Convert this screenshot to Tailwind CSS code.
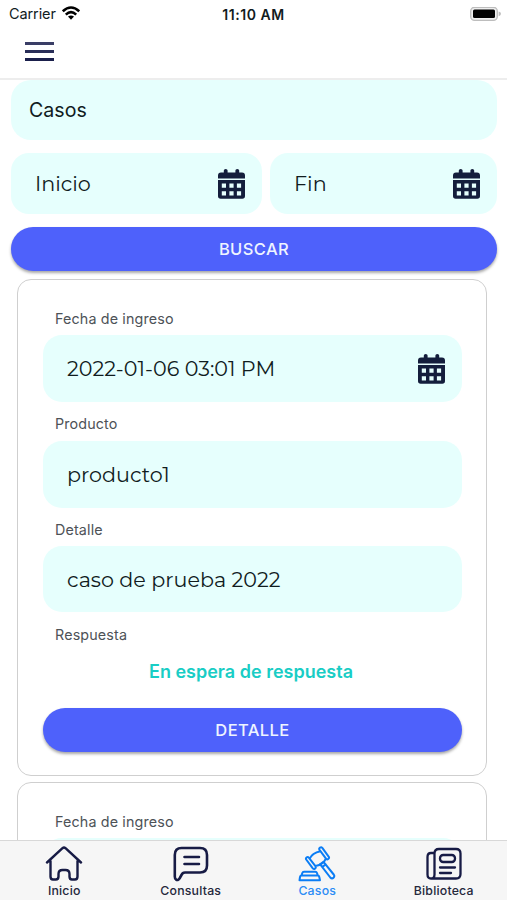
<!DOCTYPE html>
<html lang="es">
  <head>
    <meta charset="UTF-8" />
    <meta name="viewport" content="width=device-width, initial-scale=1.0" />
    <title>Casos</title>
    <script src="https://cdn.jsdelivr.net/npm/@tailwindcss/browser@4"></script>
  </head>
  <body class="bg-white font-[Inter,sans-serif] text-[#111c1e]">
    <svg class="hidden">
      <symbol id="calendar" viewBox="0 0 27 30">
        <path fill="#141e3c" d="M0 9.5V6.5Q0 3.6 3 3.6H5.8V1.5Q5.8 0 7.7 0T9.6 1.5V3.6H17.4V1.5Q17.4 0 19.3 0T21.2 1.5V3.6H24Q27 3.6 27 6.5V9.5Z" />
        <path fill="#141e3c" fill-rule="evenodd" d="M0 11H27V27Q27 29.7 24.3 29.7H2.7Q0 29.7 0 27ZM3.8 14.6V18.8H8V14.6ZM11.4 14.6V18.8H15.6V14.6ZM18.9 14.6V18.8H23.1V14.6ZM3.8 22.2V26.4H8V22.2ZM11.4 22.2V26.4H15.6V22.2ZM18.9 22.2V26.4H23.1V22.2Z" />
      </symbol>
    </svg>
    <div class="flex h-[900px] w-[507px] flex-col overflow-hidden">
      <!-- Barra de estado -->
      <div class="grid h-7 shrink-0 grid-cols-3 items-center">
        <div class="flex items-center gap-[6px] pl-[9px] text-[14.5px]">
          <span class="tracking-[-0.1px]">Carrier</span>
          <svg class="-mt-0.5" width="18" height="14" viewBox="0 0 18 14" fill="none" stroke="#000" stroke-width="2.6">
            <path d="M.8 5.3Q9-2.3 17.2 5.3M3.8 8.6Q9 3.8 14.2 8.6" />
            <path d="M9 13.7 6 10.6Q9 8.2 12 10.6Z" fill="#000" stroke="none" />
          </svg>
        </div>
        <span class="text-center text-[14px] font-semibold tracking-[0.55px]">11:10 AM</span>
        <svg class="mr-[6px] justify-self-end" width="31" height="15" viewBox="0 0 31 15">
          <rect x=".7" y=".2" width="26.6" height="13.2" rx="4" fill="#eee" stroke="#bdbdbd" stroke-width="1.4" />
          <rect x="3" y="2.5" width="22" height="8.6" rx="1.5" fill="#000" />
          <path d="M28.6 4.5Q31 5 31 6.8T28.6 9.2Z" fill="#bdbdbd" />
        </svg>
      </div>

      <header class="flex h-[52px] shrink-0 items-start border-b-2 border-[#ededed] pt-[14px] pl-[25px]">
        <div class="flex flex-col gap-[5px]">
          <div class="h-[3px] w-[29px] bg-[#3a3e66]"></div>
          <div class="h-[3px] w-[29px] bg-[#292e58]"></div>
          <div class="h-[3px] w-[29px] bg-[#1a1f4b]"></div>
        </div>
      </header>

      <main class="min-h-0 flex-1 overflow-hidden pr-[10px] pl-[11px]">
        <div class="flex h-[60px] items-center rounded-[20px] bg-[#e6fffd] pt-[2px] pl-[18px] text-[19.6px]">Casos</div>

        <div class="mt-[13px] flex gap-2 font-[Montserrat,Inter,sans-serif] text-[20.7px]">
          <div class="flex h-[61px] w-[251px] items-center justify-between rounded-[18px] bg-[#e6fffd] pr-[17px] pl-6">
            <span>Inicio</span>
            <svg class="h-[30px] w-[27px]"><use href="#calendar" /></svg>
          </div>
          <div class="flex h-[61px] flex-1 items-center justify-between rounded-[18px] bg-[#e6fffd] pr-[17px] pl-6">
            <span>Fin</span>
            <svg class="h-[30px] w-[27px]"><use href="#calendar" /></svg>
          </div>
        </div>

        <button class="mt-[13px] flex h-[44px] w-full items-center justify-center rounded-full bg-[#4e61fb] text-[16.5px] font-medium tracking-[0.4px] text-[#eef4ff] shadow-[0_2px_3px_rgba(0,0,0,0.35)]">BUSCAR</button>

        <section class="mr-[10px] ml-[6px] mt-2 h-[497px] rounded-[14px] border border-[#cfcfcf] pr-6 pl-[25px] pt-[29px]">
          <p class="pl-3 text-[14.3px] leading-5 tracking-[0.15px] text-[#4d5257]">Fecha de ingreso</p>
          <div class="mt-[6px] flex h-[67px] items-center justify-between rounded-[19px] bg-[#e6fffd] pr-[17px] pl-6 font-[Montserrat,Inter,sans-serif] text-[20.7px]">
            <span>2022-01-06 03:01 PM</span>
            <svg class="h-[30px] w-[27px]"><use href="#calendar" /></svg>
          </div>
          <p class="mt-3 pl-3 text-[14.3px] leading-5 tracking-[0.15px] text-[#4d5257]">Producto</p>
          <div class="mt-[7px] flex h-[67px] items-center rounded-[19px] bg-[#e6fffd] pl-6 font-[Montserrat,Inter,sans-serif] text-[20.7px]">producto1</div>
          <p class="mt-3 pl-3 text-[14.3px] leading-5 tracking-[0.15px] text-[#4d5257]">Detalle</p>
          <div class="mt-[6px] flex h-[66px] items-center rounded-[19px] bg-[#e6fffd] pt-px pl-6 font-[Montserrat,Inter,sans-serif] text-[20.7px]">caso de prueba 2022</div>
          <p class="mt-[13px] pl-3 text-[14.3px] leading-5 tracking-[0.15px] text-[#4d5257]">Respuesta</p>
          <p class="mt-[15px] pr-[3px] text-center text-[18px] leading-6 font-semibold text-[#19cdc5]">En espera de respuesta</p>
          <button class="mt-[24px] flex h-[44px] w-full items-center justify-center rounded-full bg-[#4e61fb] text-[16.5px] font-medium tracking-[0.4px] text-[#eef4ff] shadow-[0_2px_3px_rgba(0,0,0,0.35)]">DETALLE</button>
        </section>

        <section class="mr-[10px] ml-[6px] mt-[6px] h-[497px] rounded-[14px] border border-[#cfcfcf] pr-6 pl-[25px] pt-[29px]">
          <p class="pl-3 text-[14.3px] leading-5 tracking-[0.15px] text-[#4d5257]">Fecha de ingreso</p>
          <div class="mt-[6px] h-[67px] rounded-[19px] bg-[#e6fffd]"></div>
        </section>
      </main>

      <nav class="grid h-[60px] shrink-0 grid-cols-4 border-t border-[#d8d8d8] bg-[#f6f6f6] pl-px text-[12.3px] font-medium text-[#25283c]">
        <div class="flex flex-col items-center pt-[5px]">
          <svg width="38" height="36" viewBox="0 0 38 36" fill="none" stroke="#171b45" stroke-width="2.4" stroke-linecap="round" stroke-linejoin="round">
            <path d="M2 16.5 17.5 2.2Q19 1 20.5 2.2L36 16.5M5.5 14.5V30.5Q5.5 33.5 8 33.5H10.8Q13.5 33.5 13.5 30.5V28Q13.5 24 17.5 24H20.5Q24.5 24 24.5 28V30.5Q24.5 33.5 27 33.5H30Q32.5 33.5 32.5 30.5V14.5" />
          </svg>
          <span class="mt-px leading-4 tracking-[0.2px]">Inicio</span>
        </div>
        <div class="flex flex-col items-center pt-[5px]">
          <svg width="38" height="36" viewBox="0 0 38 36" fill="none" stroke="#171b45" stroke-width="2.6" stroke-linecap="round" stroke-linejoin="round">
            <path d="M9.5 2H28Q35 2 35 9V19.5Q35 26.5 28 26.5H13Q10.5 26.5 9.5 29L7.5 32.5Q5.8 35 4 33.5Q2.8 32.5 2.8 30.5V9Q2.8 2 9.5 2ZM12.5 11H27M12.5 18H27" />
          </svg>
          <span class="mt-px leading-4 tracking-[0.2px]">Consultas</span>
        </div>
        <div class="flex flex-col items-center pt-[5px] text-[#2b8cf5]">
          <svg width="38" height="36" viewBox="0 0 38 36" fill="none" stroke="#0b7df5" stroke-width="2" stroke-linecap="round" stroke-linejoin="round">
            <path d="M21.5 3.8Q20.7 2.5 22 1.7T24.3 1.9L30.8 10.8Q31.5 12.2 30.3 13T28.2 12.8ZM8.2 13.5Q7.5 12.2 8.7 11.4T10.8 11.7L17.6 20.4Q18.2 21.8 17 22.6T14.8 22.3ZM11.8 12.5Q14 7 22.5 5.2M17.6 20Q25.5 18.5 27.8 12.6" />
            <path d="M22 18.2 25.5 15.8 35.7 28.5Q37 30.2 35.5 31.7T32.3 31.5ZM24.3 21 27.7 18.4" />
            <path d="M6 25.8H17.3Q18.6 25.8 19 27L19.8 29.5H3.5L4.3 27Q4.7 25.8 6 25.8ZM3.5 29.5H19.8Q21 29.5 21.3 31L22 34.3H1.5L2 31Q2.3 29.5 3.5 29.5Z" />
          </svg>
          <span class="mt-px leading-4 tracking-[0.2px]">Casos</span>
        </div>
        <div class="flex flex-col items-center pt-[5px]">
          <svg width="38" height="36" viewBox="0 0 38 36" fill="none" stroke="#171b45" stroke-width="2.3" stroke-linecap="round" stroke-linejoin="round">
            <path d="M9.5 7H6Q2.5 7 2.5 11V28.5Q2.5 32.5 6 32.5H31Q35.5 32.5 35.5 28V7.5Q35.5 3 31 3H14Q9.5 3 9.5 7.5V28.5Q9.5 32.5 6 32.5" />
            <rect x="15" y="9" width="15" height="7" rx="3.2" />
            <path d="M15 21.5H30M15 27H26" />
          </svg>
          <span class="mt-px leading-4 tracking-[0.2px]">Biblioteca</span>
        </div>
      </nav>
    </div>
  </body>
</html>
